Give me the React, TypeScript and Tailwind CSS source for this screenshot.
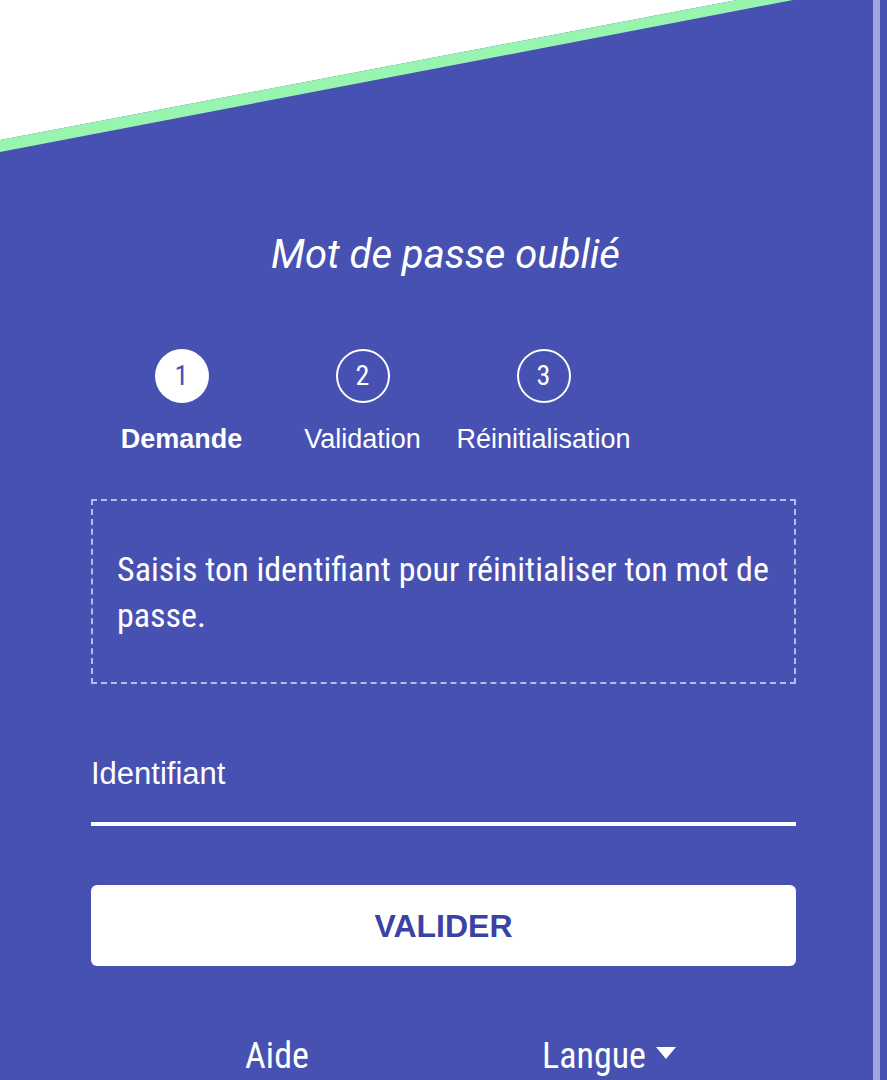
const condensed = "font-['Roboto_Condensed','Liberation_Sans_Narrow','DejaVu_Sans_Condensed',Roboto,sans-serif] [font-stretch:82%]";
const roboto = "font-['Roboto',sans-serif]";
const arial = "font-['Liberation_Sans',Arial,sans-serif]";

const steps = [
    { n: "1", label: "Demande", active: true },
    { n: "2", label: "Validation", active: false },
    { n: "3", label: "Réinitialisation", active: false },
];

export default function App() {
    return (
        <div className="h-[1080px] bg-[#4751b2] flex overflow-hidden text-white">
            <div className="flex-1 flex flex-col">
                {/* Header diagonal */}
                <svg className="block w-full h-[153px] shrink-0" viewBox="0 0 873 153" preserveAspectRatio="none">
                    <polygon points="0,0 737,0 0,140" fill="#ffffff" />
                    <polygon points="0,140 737,0 793,0 0,152" fill="#98f5b0" />
                </svg>

                <div className="ml-[91px] w-[705px] flex flex-col">
                    <h1 className={`mt-[80px] pl-[4px] text-center text-[40px] leading-[44px] italic ${roboto}`}>
                        Mot de passe oublié
                    </h1>

                    {/* Stepper */}
                    <div className="mt-[72px] flex">
                        {steps.map((s) => (
                            <div key={s.n} className="w-[181px] flex flex-col items-center">
                                <div
                                    className={
                                        s.active
                                            ? `w-[54px] h-[54px] rounded-full bg-white text-[#4751b2] flex items-center justify-center text-[28px] ${condensed}`
                                            : `w-[54px] h-[54px] rounded-full border-2 border-white flex items-center justify-center text-[28px] ${condensed}`
                                    }
                                >
                                    {s.n}
                                </div>
                                <div className={`mt-[21px] text-[27px] leading-[30px] whitespace-nowrap ${arial} ${s.active ? "font-bold" : ""}`}>
                                    {s.label}
                                </div>
                            </div>
                        ))}
                    </div>

                    {/* Info box */}
                    <div className="mt-[45px] h-[185px] border-2 border-dashed border-[#b7bcea] px-[24px] flex items-center">
                        <p className={`text-[34px] leading-[46px] ${condensed}`}>
                            Saisis ton identifiant pour réinitialiser ton mot de passe.
                        </p>
                    </div>

                    {/* Field */}
                    <label className={`mt-[72px] text-[31px] leading-[36px] ${arial}`}>Identifiant</label>
                    <div className="mt-[30px] h-[4px] bg-white" />

                    {/* Submit */}
                    <button className={`mt-[59px] h-[81px] rounded-md bg-white text-[#3a42a6] text-[32px] font-bold ${arial}`}>
                        VALIDER
                    </button>

                    {/* Footer */}
                    <div className={`mt-[71px] -ml-[91px] w-[873px] pl-[13px] flex justify-center text-[36px] leading-[38px] ${condensed}`}>
                        <div className="w-[332px] flex justify-center">Aide</div>
                        <div className="w-[332px] flex justify-center items-center gap-[10px]">
                            Langue
                            <svg width="20" height="12" viewBox="0 0 20 12" className="mt-[-6px]">
                                <polygon points="0,0 20,0 10,12" fill="#ffffff" />
                            </svg>
                        </div>
                    </div>
                </div>
            </div>
            <div className="w-[7px] bg-[#9fa6e0] shrink-0" />
            <div className="w-[7px] shrink-0" />
        </div>
    );
}
